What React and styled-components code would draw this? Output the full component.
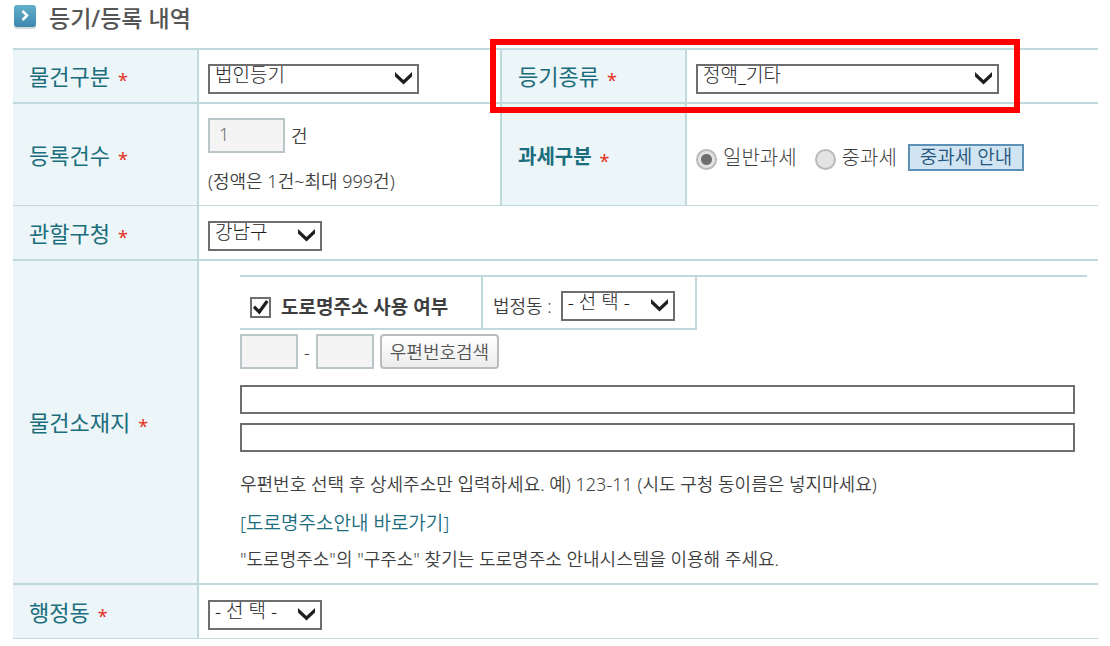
import { useState } from 'react';
import styled, { createGlobalStyle } from 'styled-components';

const GlobalStyle = createGlobalStyle`
  * {
    box-sizing: border-box;
  }

  body {
    margin: 0;
    background-color: #ffffff;
    color: #3e3e3e;
    font-family: "Noto Sans", "Noto Sans CJK KR", sans-serif;
    font-size: 18px;
    font-weight: 350;
    line-height: 26px;
  }

  input, select, button {
    margin: 0;
    font-family: inherit;
    font-size: 18px;
    font-weight: 350;
  }
`;

const Page = styled.main`
  padding: 0 12px 0 13px;
`;

const TitleBar = styled.header`
  display: flex;
  align-items: center;
  gap: 12px;
  height: 48px;
  padding-bottom: 14px;
`;

const Title = styled.h1`
  margin: 0;
  padding-top: 2px;
  color: #555555;
  font-size: 23px;
  font-weight: 500;
`;

const TitleIcon = styled.svg`
  width: 24px;
  height: 26px;
`;

const Form = styled.form`
  border-top: 2px solid #c0d9dd;
`;

const Row = styled.div`
  display: flex;
  min-height: ${(props) => props.$height || '54px'};
  border-bottom: ${(props) => (props.$thin ? '1px' : '2px')} solid #c0d9dd;
`;

// 라벨 + 값 한 쌍
const Field = styled.div`
  position: relative;
  display: flex;
  flex: ${(props) => props.$grow || 1} 1 0;
  min-width: 0;
`;

const LabelCell = styled.div`
  display: flex;
  flex: none;
  align-items: center;
  gap: 8px;
  width: ${(props) => (props.$divided ? '187px' : '186px')};
  padding: ${(props) => (props.$bold ? '4px 0 0 16px' : '0 0 0 16px')};
  border-left: ${(props) => (props.$divided ? '2px solid #c0d9dd' : 'none')};
  border-right: 2px solid #c0d9dd;
  background-color: #ecf5f7;
  color: #1a6d7c;
  font-size: ${(props) => (props.$bold ? '20px' : '22px')};
  font-weight: ${(props) => (props.$bold ? 700 : 400)};
`;

const Star = styled.span`
  padding-top: 8px;
  color: #e5301f;
  font-size: 18px;
  font-weight: 400;
`;

const Value = styled.div`
  display: flex;
  flex: 1;
  align-items: center;
  min-width: 0;
  padding: 6px 8px 0 9px;
`;

const Stack = styled.div`
  flex: 1;
  min-width: 0;
  padding: 14px 8px 11px 9px;
`;

const Line = styled.div`
  display: flex;
  align-items: center;
  gap: 6px;
`;

const Note = styled.p`
  margin: ${(props) => props.$top || '10px'} 0 0;
`;

const SelectBox = styled.span`
  position: relative;
  display: inline-flex;
  width: ${(props) => props.$width};
  height: 30px;
  border: 2px solid #6e6e6e;
  background-color: #ffffff;
  overflow: hidden;
`;

// 글자가 위쪽에 붙어 보이는 select
const Select = styled.select`
  appearance: none;
  width: 100%;
  height: 26px;
  margin-top: -4px;
  padding: 0 24px 0 5px;
  border: none;
  border-radius: 0;
  outline: none;
  background-color: transparent;
  color: #1e1e1e;
  font-size: 19px;
  font-weight: 300;
`;

const Arrow = styled.svg`
  position: absolute;
  top: 6px;
  right: 5px;
  width: 17px;
  height: 13px;
  pointer-events: none;
`;

const GrayInput = styled.input`
  width: ${(props) => props.$width};
  height: 35px;
  padding: 0 9px 4px;
  border: 2px solid #b9c5c7;
  background-color: #f4f4f4;
  color: #6e6e6e;
  font-weight: 300;
`;

const AddressInput = styled.input`
  display: block;
  width: 100%;
  height: 29px;
  padding: 0 6px;
  border: 2px solid #6e6e6e;
  background-color: #ffffff;
`;

const AddressLines = styled.div`
  display: grid;
  gap: 9px;
  padding: 16px 12px 0 0;
`;

const RadioGroup = styled.div`
  display: flex;
  gap: 18px;
  margin-right: 11px;
`;

const RadioLabel = styled.label`
  display: flex;
  align-items: center;
  gap: 6px;
  font-size: 20px;
  font-weight: 300;
`;

const Radio = styled.input`
  appearance: none;
  width: 21px;
  height: 21px;
  margin-top: 4px;
  border: 2px solid #bababa;
  border-radius: 50%;
  background-color: #e3e3e3;

  &:checked {
    background-image: radial-gradient(circle, #6e6e6e 5px, transparent 6px);
  }
`;

const GuideButton = styled.button`
  height: 27px;
  padding: 0 10px;
  border: 2px solid #5e91b8;
  background-color: #d1e4f2;
  color: #25557d;
  font-size: 19px;
  line-height: 23px;
`;

const ZipButton = styled.button`
  height: 35px;
  padding: 0 8px 2px;
  border: 2px solid #bcbcbc;
  border-radius: 4px;
  background: linear-gradient(#ffffff, #ececec);
  color: #555555;
`;

const AddressArea = styled.div`
  flex: 1;
  min-width: 0;
  padding: 14px 11px 11px 41px;
`;

const Options = styled.div`
  display: flex;
  border-top: 2px solid #c0d9dd;
`;

const Option = styled.div`
  display: flex;
  align-items: center;
  gap: 9px;
  width: ${(props) => props.$width};
  height: 53px;
  padding: 7px 0 0 10px;
  border-right: 2px solid #c0d9dd;
  border-bottom: 2px solid #c0d9dd;
`;

const CheckLabel = styled.label`
  display: flex;
  align-items: center;
  gap: 10px;
  padding-top: 2px;
  font-size: 19px;
  font-weight: 700;
`;

const CheckBox = styled.span`
  position: relative;
  display: flex;
`;

const Check = styled.input`
  appearance: none;
  width: 21px;
  height: 21px;
  border: 2px solid #6e6e6e;
  background-color: #ffffff;

  & + svg {
    position: absolute;
    top: 0;
    left: 0;
    visibility: hidden;
    pointer-events: none;
  }

  &:checked + svg {
    visibility: visible;
  }
`;

const ZipLine = styled(Line)`
  margin-top: 4px;
`;

const GuideLink = styled.a`
  color: #1a6d7c;
  font-size: 19px;
  text-decoration: none;
`;

// 강조 표시 (등기종류)
const Highlight = styled.div`
  position: absolute;
  top: -11px;
  bottom: -11px;
  left: -10px;
  z-index: 1;
  width: 530px;
  border: 6px solid #ff0000;
  pointer-events: none;
`;

function Label({ id, text, divided, bold }) {
  return (
    <LabelCell $divided={divided} $bold={bold}>
      <label htmlFor={id}>{text}</label>
      <Star>*</Star>
    </LabelCell>
  );
}

function Dropdown({ id, width, options }) {
  return (
    <SelectBox $width={width}>
      <Select id={id}>
        {options.map((option) => (
          <option key={option}>{option}</option>
        ))}
      </Select>
      <Arrow viewBox="0 0 17 13">
        <path d="M0 0 L8.5 8 L17 0 V4.5 L8.5 12.5 L0 4.5 Z" fill="#1e1e1e" />
      </Arrow>
    </SelectBox>
  );
}

function App() {
  const [tax, setTax] = useState('normal');

  return (
    <Page>
      <GlobalStyle />
      <TitleBar>
        <TitleIcon viewBox="0 0 24 26">
          <defs>
            <linearGradient id="iconFill" x1="0" y1="0" x2="0" y2="1">
              <stop offset="0" stopColor="#62b0c8" />
              <stop offset="1" stopColor="#3d87b2" />
            </linearGradient>
          </defs>
          <rect x="1" y="3" width="22" height="22" rx="3" fill="#d5dadd" />
          <rect x="1" y="1" width="22" height="22" rx="3" fill="url(#iconFill)" />
          <path d="M9.5 7 L14 11.5 L9.5 16" fill="none" stroke="#ffffff" strokeWidth="2.6" />
        </TitleIcon>
        <Title>등기/등록 내역</Title>
      </TitleBar>

      <Form>
        <Row>
          <Field $grow={487}>
            <Label id="kind" text="물건구분" />
            <Value>
              <Dropdown id="kind" width="211px" options={['법인등기']} />
            </Value>
          </Field>
          <Field $grow={598}>
            <Label id="regType" text="등기종류" divided />
            <Value>
              <Dropdown id="regType" width="303px" options={['정액_기타']} />
            </Value>
            <Highlight />
          </Field>
        </Row>

        <Row $thin>
          <Field $grow={487}>
            <Label id="count" text="등록건수" />
            <Stack>
              <Line>
                <GrayInput id="count" $width="77px" value="1" readOnly />
                <span>건</span>
              </Line>
              <Note $top="15px">(정액은 1건~최대 999건)</Note>
            </Stack>
          </Field>
          <Field $grow={598}>
            <Label id="taxNormal" text="과세구분" divided bold />
            <Value>
              <RadioGroup>
                <RadioLabel>
                  <Radio
                    id="taxNormal"
                    type="radio"
                    name="tax"
                    checked={tax === 'normal'}
                    onChange={() => setTax('normal')}
                  />
                  일반과세
                </RadioLabel>
                <RadioLabel>
                  <Radio
                    type="radio"
                    name="tax"
                    checked={tax === 'heavy'}
                    onChange={() => setTax('heavy')}
                  />
                  중과세
                </RadioLabel>
              </RadioGroup>
              <GuideButton type="button">중과세 안내</GuideButton>
            </Value>
          </Field>
        </Row>

        <Row $height="55px">
          <Field>
            <Label id="office" text="관할구청" />
            <Value>
              <Dropdown id="office" width="114px" options={['강남구']} />
            </Value>
          </Field>
        </Row>

        <Row>
          <Field>
            <Label id="address1" text="물건소재지" />
            <AddressArea>
              <Options>
                <Option $width="243px">
                  <CheckLabel>
                    <CheckBox>
                      <Check type="checkbox" defaultChecked />
                      <svg width="21" height="21" viewBox="0 0 21 21">
                        <path d="M3 11 L5 8.5 L9 12.5 L16 3 L18.5 5 L9.5 17.5 Z" fill="#1e1e1e" />
                      </svg>
                    </CheckBox>
                    도로명주소 사용 여부
                  </CheckLabel>
                </Option>
                <Option $width="214px">
                  <label htmlFor="legalDong">법정동 :</label>
                  <Dropdown id="legalDong" width="114px" options={['- 선 택 -']} />
                </Option>
              </Options>
              <ZipLine>
                <GrayInput $width="58px" aria-label="우편번호 앞자리" readOnly />
                <span>-</span>
                <GrayInput $width="58px" aria-label="우편번호 뒷자리" readOnly />
                <ZipButton type="button">우편번호검색</ZipButton>
              </ZipLine>
              <AddressLines>
                <AddressInput id="address1" type="text" />
                <AddressInput type="text" aria-label="상세주소" />
              </AddressLines>
              <Note $top="19px">
                우편번호 선택 후 상세주소만 입력하세요. 예) 123-11 (시도 구청 동이름은 넣지마세요)
              </Note>
              <Note $top="13px">
                <GuideLink href="#guide">[도로명주소안내 바로가기]</GuideLink>
              </Note>
              <Note>"도로명주소"의 "구주소" 찾기는 도로명주소 안내시스템을 이용해 주세요.</Note>
            </AddressArea>
          </Field>
        </Row>

        <Row $thin>
          <Field>
            <Label id="adminDong" text="행정동" />
            <Value>
              <Dropdown id="adminDong" width="114px" options={['- 선 택 -']} />
            </Value>
          </Field>
        </Row>
      </Form>
    </Page>
  );
}

export default App;
